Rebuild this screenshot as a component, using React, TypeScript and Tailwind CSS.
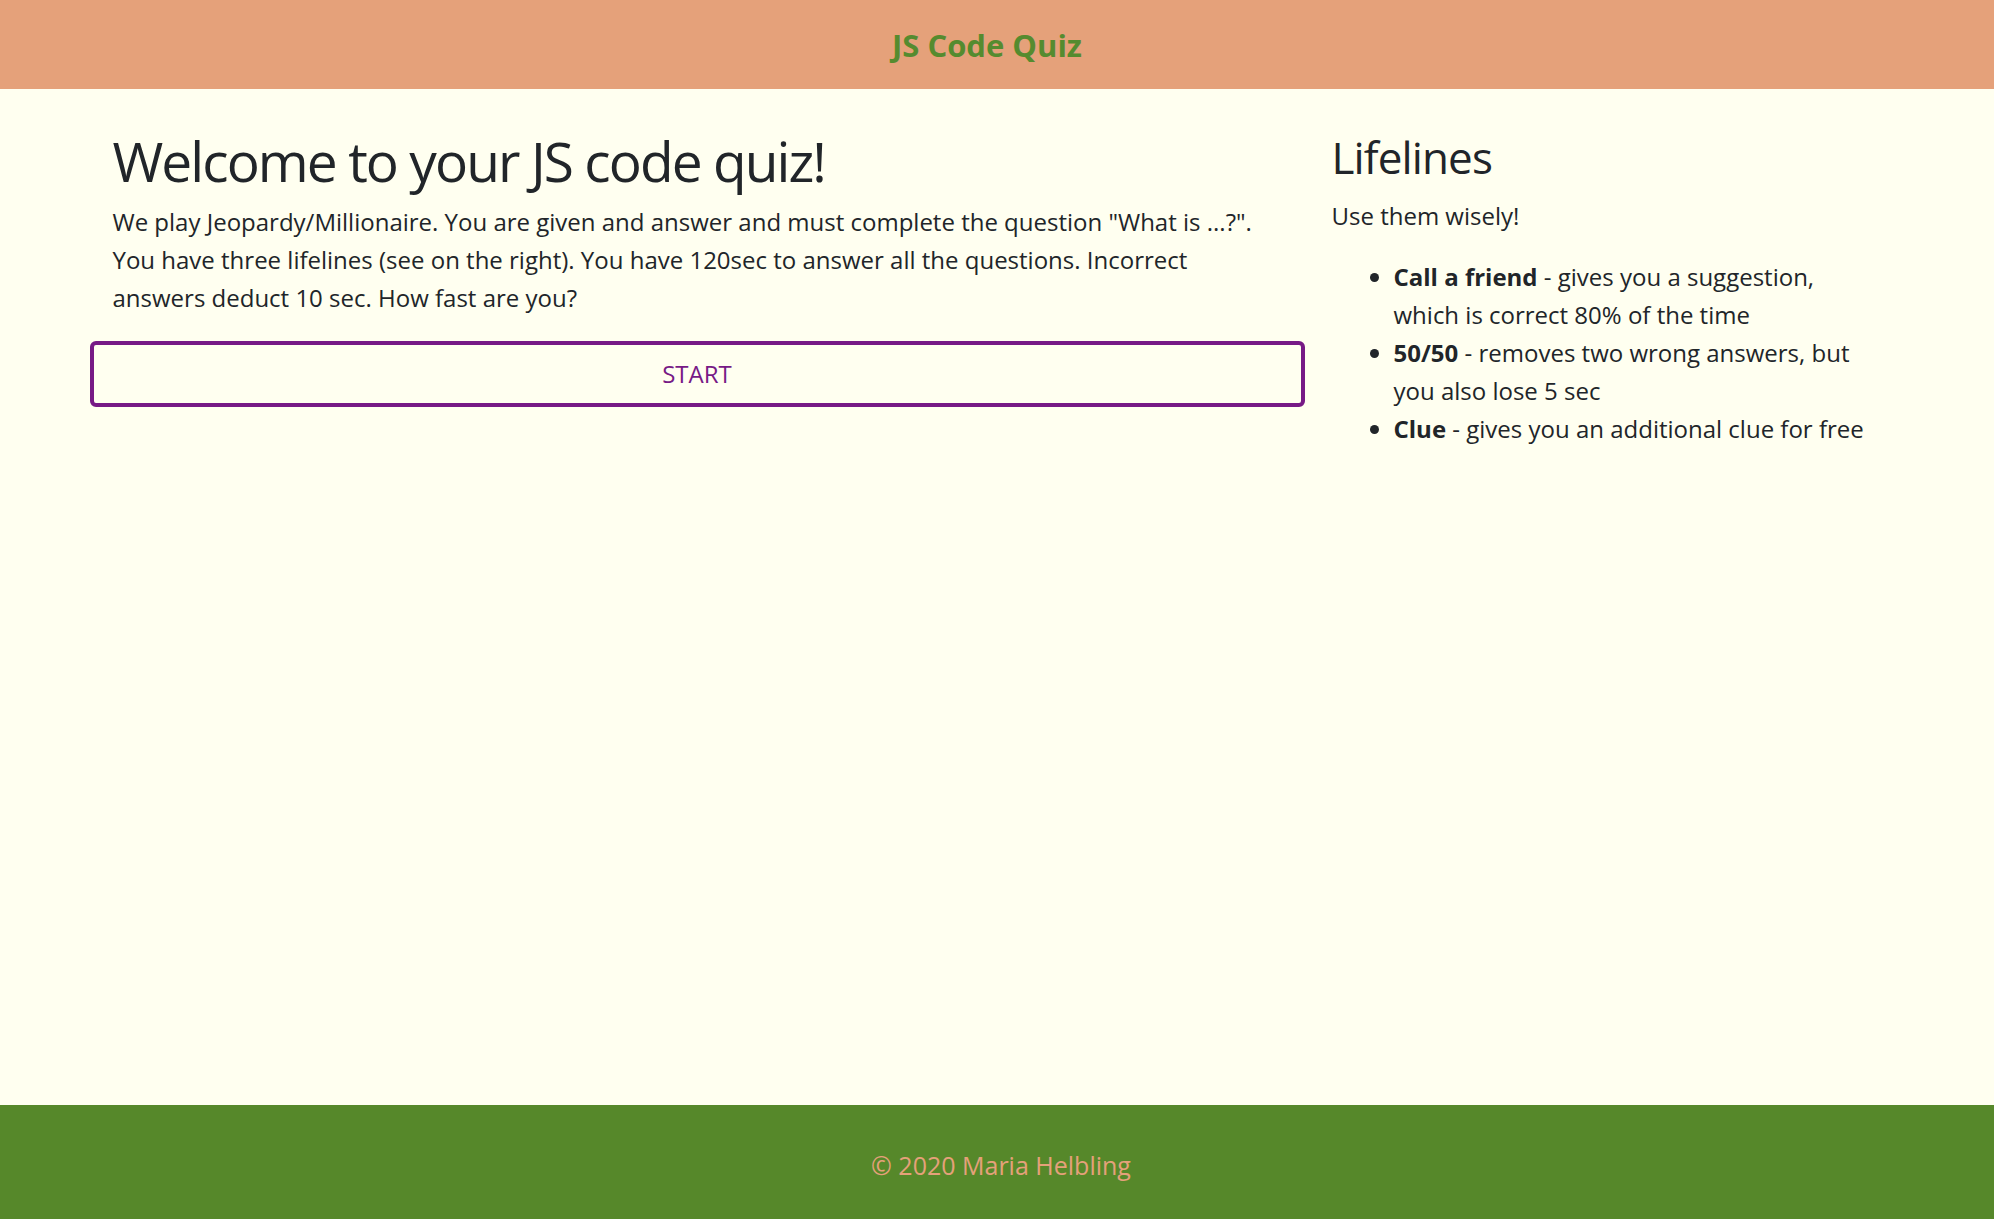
export default function App() {
  return (
    <div
      className="min-h-screen flex flex-col bg-[#fffff0] text-[#212529]"
      style={{ fontFamily: '"Open Sans", "Noto Sans", sans-serif' }}
    >
      <header className="h-[89px] bg-[#e5a17a] flex items-center justify-center pr-[20px] pt-[2px]">
        <h1 className="text-[31px] font-bold text-[#558b2f]">JS Code Quiz</h1>
      </header>

      <main className="flex-1">
        <div className="w-[1815px] mx-auto pt-[36px] flex gap-[27px]">
          {/* quiz intro */}
          <div className="w-[1215px]">
            <div className="pl-[23px]">
              <h2 className="text-[55px] leading-[72px] font-medium tracking-[-0.035em]">Welcome to your JS code quiz!</h2>
              <p className="mt-[6px] text-[24px] leading-[38px]">
                We play Jeopardy/Millionaire. You are given and answer and must complete the question "What is ...?".
                <br />
                You have three lifelines (see on the right). You have 120sec to answer all the questions. Incorrect
                <br />
                answers deduct 10 sec. How fast are you?
              </p>
            </div>
            <button className="mt-[24px] w-full h-[66px] border-4 border-[#771a86] rounded-[6px] text-[#771a86] text-[24px] flex items-center justify-center">
              START
            </button>
          </div>

          {/* lifelines */}
          <div className="w-[573px] pt-[5px]">
            <h2 className="text-[44px] leading-[55px] font-medium tracking-[-0.02em]">Lifelines</h2>
            <p className="mt-[12px] text-[24px] leading-[38px]">Use them wisely!</p>
            <ul className="mt-[23px] list-disc pl-[62px] text-[24px] leading-[38px] whitespace-nowrap">
              <li>
                <b>Call a friend</b> - gives you a suggestion,
                <br />
                which is correct 80% of the time
              </li>
              <li>
                <b>50/50</b> - removes two wrong answers, but
                <br />
                you also lose 5 sec
              </li>
              <li>
                <b>Clue</b> - gives you an additional clue for free
              </li>
            </ul>
          </div>
        </div>
      </main>

      <footer className="h-[114px] bg-[#56882a] flex items-center justify-center pl-[8px] pt-[8px]">
        <p className="text-[25px] text-[#e5a17a]">© 2020 Maria Helbling</p>
      </footer>
    </div>
  );
}
